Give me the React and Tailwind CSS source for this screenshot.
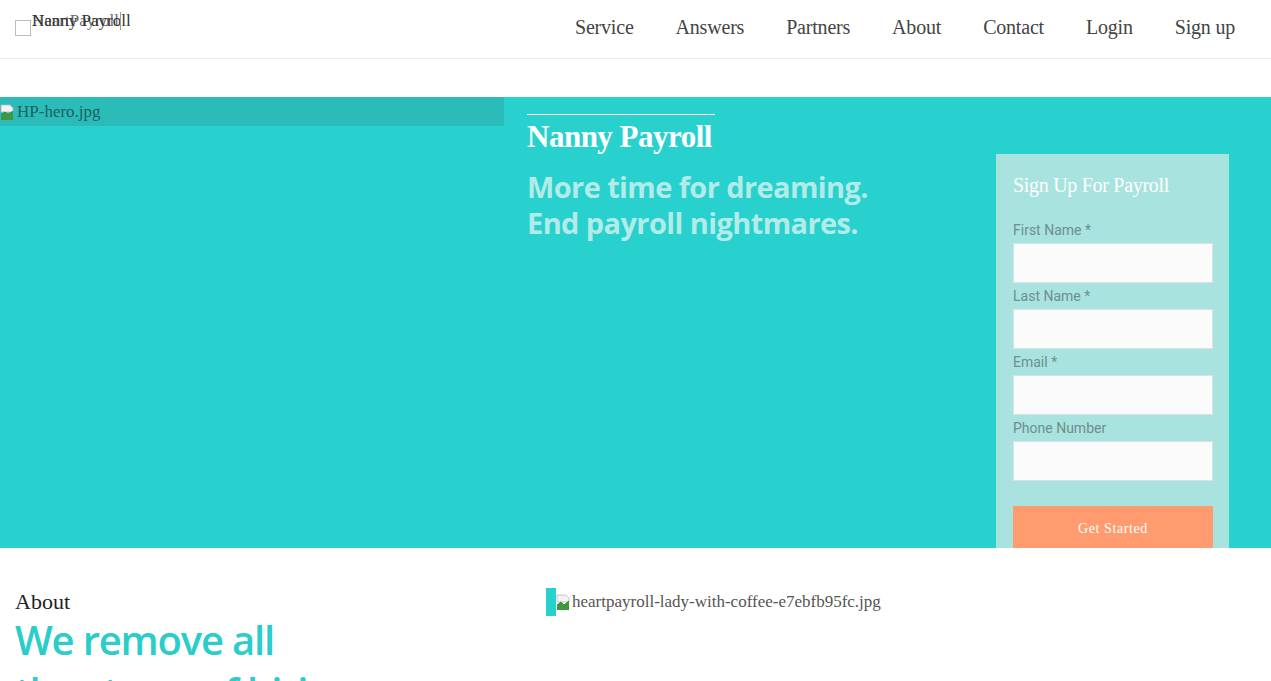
import React from 'react';

const navLinks = ['Service', 'Answers', 'Partners', 'About', 'Contact', 'Login', 'Sign up'];
const fields = ['First Name *', 'Last Name *', 'Email *', 'Phone Number'];

function BrokenImg() {
  return (
    <svg width="16" height="16" viewBox="0 0 16 16" className="shrink-0">
      <path d="M1 1h9l3 3v4H1z" fill="#f3f3f3" stroke="#b9b9b9" strokeWidth="0.8" />
      <path d="M1 16V11l4-3 3 3 5-4v9z" fill="#3c9a3c" />
      <path d="M1 11l4-3 3 3 5-4" fill="none" stroke="#2e7d2e" strokeWidth="0.8" />
    </svg>
  );
}

function Logo() {
  return (
    <div className="flex items-start pl-[15px] pt-[11px]">
      <div className="mt-[9px] w-[16px] h-[16px] border border-[#bdbdbd]" />
      <div className="relative h-[20px] w-[90px] text-[17px] leading-[19px] text-[#333] font-['Liberation_Serif',serif]">
        <span className="absolute left-[1px] top-0 whitespace-nowrap">Nanny Payroll</span>
        <span className="absolute left-[1px] top-0 whitespace-nowrap opacity-70">HeartPayroll</span>
        <span className="absolute left-[89px] top-[1px] h-[18px] border-l border-[#999]" />
      </div>
    </div>
  );
}

export default function App() {
  return (
    <div className="w-[1271px] h-[681px] overflow-hidden bg-white font-['Liberation_Serif',serif]">
      <header className="h-[59px] flex justify-between border-b border-[#ececec]">
        <Logo />
        <nav className="flex items-center gap-[42px] pr-[36px] pb-[4px] text-[20px] text-[#444] font-light tracking-[-0.2px]">
          {navLinks.map((l) => (
            <a key={l} href="#" className="whitespace-nowrap">{l}</a>
          ))}
        </nav>
      </header>

      <div className="h-[38px]" />

      <section className="h-[451px] overflow-hidden bg-[#28d1ce] flex">
        <div className="w-[504px] shrink-0">
          <div className="h-[29px] bg-[#2bbcba] flex items-center gap-[1px] text-[17px] text-[#1e5e5e]">
            <BrokenImg />
            <span>HP-hero.jpg</span>
          </div>
        </div>

        <div className="flex-1 flex justify-between pl-[23px] pr-[42px]">
          <div className="pt-[17px]">
            <div className="w-[188px] border-t border-white" />
            <h1 className="mt-[4px] text-[31px] leading-[36px] font-bold text-white tracking-[-0.5px]">Nanny Payroll</h1>
            <p className="mt-[14px] text-[29px] leading-[36px] font-bold text-[#b2ebe7] font-['Open_Sans',sans-serif] tracking-[-0.6px]">
              More time for dreaming.
              <br />
              End payroll nightmares.
            </p>
          </div>

          <form className="mt-[57px] w-[233px] h-[420px] bg-[#a8e3df] px-[17px] pt-[18px]">
            <h2 className="text-[20px] leading-[26px] text-white tracking-[-0.3px]">Sign Up For Payroll</h2>
            <div className="mt-[24px] flex flex-col">
              {fields.map((f) => (
                <div key={f} className="mb-[5px]">
                  <label className="block text-[14px] leading-[16px] text-[#6d8f8d] font-['Roboto',sans-serif]">{f}</label>
                  <input className="mt-[5px] block w-[200px] h-[40px] bg-[#fafafa] border border-[#d6e4e3]" />
                </div>
              ))}
            </div>
            <button type="button" className="mt-[20px] w-[200px] h-[44px] bg-[#ff9b6e] text-white text-[14px] tracking-[0.6px]">
              Get Started
            </button>
          </form>
        </div>
      </section>

      <section className="flex pt-[40px]">
        <div className="w-[546px] shrink-0 pl-[15px]">
          <h3 className="text-[22px] leading-[28px] text-[#222] font-light">About</h3>
          <h2 className="mt-[-2px] text-[40px] leading-[52px] font-semibold text-[#2acdc9] font-['Open_Sans',sans-serif] tracking-[-1.2px]">
            We remove all
            <br />
            the stress of hiring
          </h2>
        </div>
        <div className="flex items-start">
          <div className="w-[10px] h-[28px] bg-[#28d1ce]" />
          <div className="flex items-center text-[17px] leading-[28px] text-[#555]">
            <BrokenImg />
            <span>heartpayroll-lady-with-coffee-e7ebfb95fc.jpg</span>
          </div>
        </div>
      </section>
    </div>
  );
}
